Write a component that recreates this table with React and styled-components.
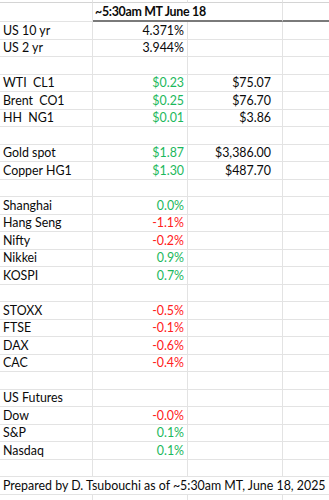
import React from 'react'
import styled, { createGlobalStyle } from 'styled-components'

const GlobalStyle = createGlobalStyle`
  html, body {
    margin: 0;
    padding: 0;
    background: #ffffff;
  }
  body {
    font-family: Lato, "Open Sans", sans-serif;
    overflow: hidden;
  }
`

const Sheet = styled.div`
  width: 329px;
  height: 500px;
  overflow: hidden;
  display: grid;
  grid-template-columns: 93px 95px 95px 1fr;
  grid-template-rows: 3px 19px repeat(28, 17.5px);
  color: #0a0a0a;
  font-size: 12.4px;
`

const TopStrip = styled.div`
  box-sizing: border-box;
  border-bottom: 1px solid #d4d4d4;
  border-right: ${p => (p.$last ? 'none' : '1px solid #e3e3e3')};
`

const Cell = styled.div`
  box-sizing: border-box;
  border-bottom: 1px solid #e3e3e3;
  border-right: ${p => (p.$last ? 'none' : '1px solid #e3e3e3')};
  padding: 0 ${p => p.$pad || 3}px 1px 3px;
  display: flex;
  align-items: flex-end;
  justify-content: ${p => (p.$right ? 'flex-end' : 'flex-start')};
  white-space: pre;
  color: ${p => (p.$tone === 'up' ? '#1cb85c' : p.$tone === 'down' ? '#ff2020' : 'inherit')};
`

const HeaderCell = styled.div`
  box-sizing: border-box;
  grid-column: ${p => p.$span || 'auto'};
  border-bottom: 2px solid #7a7a7a;
  border-right: ${p => (p.$last ? 'none' : '1px solid #e3e3e3')};
  font-weight: 700;
  letter-spacing: -0.3px;
  padding: 0 0 1px 2px;
  display: flex;
  align-items: flex-end;
  white-space: nowrap;
`

const FooterCell = styled.div`
  grid-column: 1 / -1;
  box-sizing: border-box;
  border-bottom: 1px solid #e3e3e3;
  padding: 0 0 1px 3px;
  display: flex;
  align-items: flex-end;
  white-space: nowrap;
`

const rows = [
  ['US 10 yr', '4.371%', '', null],
  ['US 2 yr', '3.944%', '', null],
  [],
  ['WTI  CL1', '$0.23', '$75.07', 'up'],
  ['Brent  CO1', '$0.25', '$76.70', 'up'],
  ['HH  NG1', '$0.01', '$3.86', 'up'],
  [],
  ['Gold spot', '$1.87', '$3,386.00', 'up'],
  ['Copper HG1', '$1.30', '$487.70', 'up'],
  [],
  ['Shanghai', '0.0%', '', 'up'],
  ['Hang Seng', '-1.1%', '', 'down'],
  ['Nifty', '-0.2%', '', 'down'],
  ['Nikkei', '0.9%', '', 'up'],
  ['KOSPI', '0.7%', '', 'up'],
  [],
  ['STOXX', '-0.5%', '', 'down'],
  ['FTSE', '-0.1%', '', 'down'],
  ['DAX', '-0.6%', '', 'down'],
  ['CAC', '-0.4%', '', 'down'],
  [],
  ['US Futures', '', '', null],
  ['Dow', '-0.0%', '', 'down'],
  ['S&P', '0.1%', '', 'up'],
  ['Nasdaq', '0.1%', '', 'up'],
  [],
]

function App() {
  return (
    <>
      <GlobalStyle />
      <Sheet>
        <TopStrip />
        <TopStrip />
        <TopStrip />
        <TopStrip $last />

        <Cell />
        <HeaderCell $span="2 / 4">~5:30am MT June 18</HeaderCell>
        <HeaderCell $last />

        {rows.map((r, i) => (
          <React.Fragment key={i}>
            <Cell>{r[0] || ''}</Cell>
            <Cell $right $tone={r[3]}>{r[1] || ''}</Cell>
            <Cell $right $pad={11}>{r[2] || ''}</Cell>
            <Cell $last />
          </React.Fragment>
        ))}

        <FooterCell>Prepared by D. Tsubouchi as of ~5:30am MT, June 18, 2025</FooterCell>
        <Cell />
        <Cell />
        <Cell />
        <Cell $last />
      </Sheet>
    </>
  )
}

export default App
